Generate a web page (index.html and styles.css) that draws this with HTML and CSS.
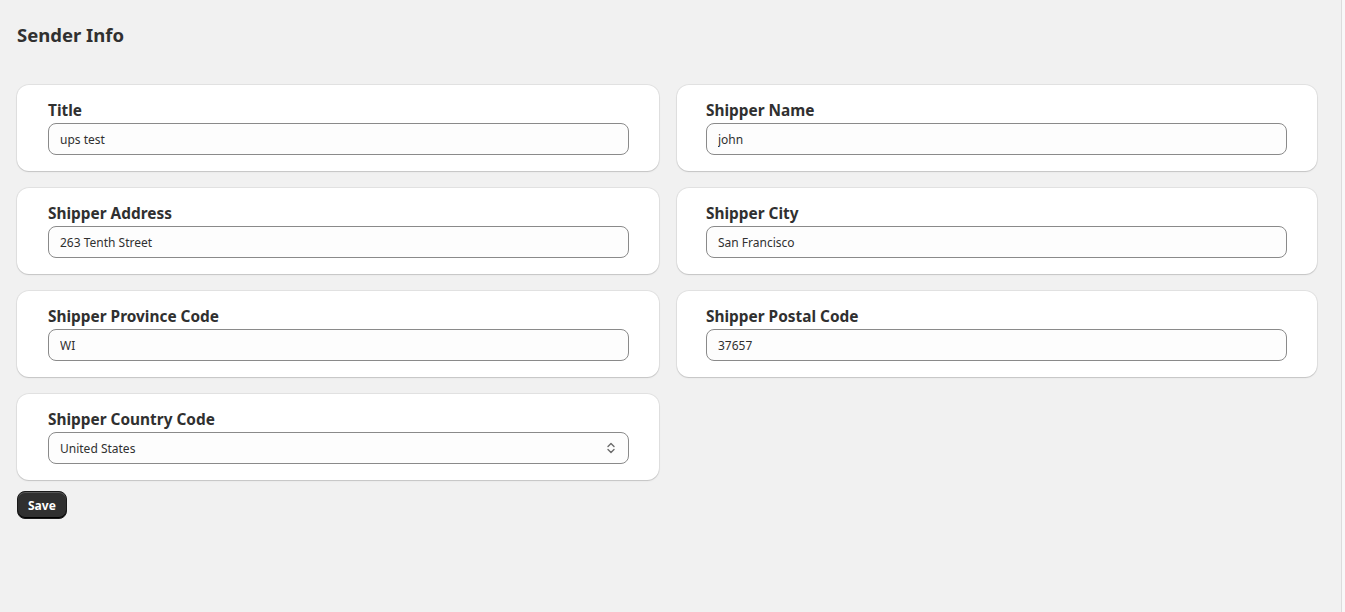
FILE: index.html
```html
<!DOCTYPE html>
<html lang="en">
<head>
<meta charset="utf-8">
<title>Sender Info</title>
<link rel="stylesheet" href="styles.css">
</head>
<body>
<div class="page">
  <h1 class="heading">Sender Info</h1>
  <form class="form">
    <div class="grid">
      <div class="card">
        <label class="label">Title</label>
        <input class="field" type="text" value="ups test">
      </div>
      <div class="card card-right">
        <label class="label">Shipper Name</label>
        <input class="field" type="text" value="john">
      </div>
      <div class="card">
        <label class="label">Shipper Address</label>
        <input class="field" type="text" value="263 Tenth Street">
      </div>
      <div class="card card-right">
        <label class="label">Shipper City</label>
        <input class="field" type="text" value="San Francisco">
      </div>
      <div class="card">
        <label class="label">Shipper Province Code</label>
        <input class="field" type="text" value="WI">
      </div>
      <div class="card card-right">
        <label class="label">Shipper Postal Code</label>
        <input class="field" type="text" value="37657">
      </div>
      <div class="card">
        <label class="label">Shipper Country Code</label>
        <div class="select">
          <span class="select-value">United States</span>
          <svg class="chevron" width="10" height="14" viewBox="0 0 10 14" fill="none" stroke="#6b6b6b" stroke-width="1.4" stroke-linecap="round" stroke-linejoin="round">
            <path d="M2 5.5 L5 2.5 L8 5.5"/>
            <path d="M2 8.5 L5 11.5 L8 8.5"/>
          </svg>
        </div>
      </div>
    </div>
    <button class="save" type="button">Save</button>
  </form>
</div>
</body>
</html>
```

FILE: styles.css
```css
html, body {
  margin: 0;
  padding: 0;
  background: #f8f8f8;
}

body {
  font-family: "Noto Sans", "Open Sans", sans-serif;
  color: #303030;
}

.page {
  width: 1342px;
  height: 612px;
  box-sizing: border-box;
  background: #f1f1f1;
  border-right: 1px solid #dcdcdc;
  padding: 22px 25px 0 17px;
}

.heading {
  margin: 0;
  font-size: 18.5px;
  font-weight: 700;
  line-height: 26px;
  color: #303030;
}

.form {
  margin-top: 37px;
}

.grid {
  display: grid;
  grid-template-columns: 642px 640px;
  column-gap: 18px;
  row-gap: 17px;
  align-items: start;
}

.card {
  background: #ffffff;
  border-radius: 12px;
  box-shadow: 0 1px 0 0 rgba(26, 26, 26, 0.07), 0 0 0 1px rgba(0, 0, 0, 0.06), 0 1px 2px rgba(0, 0, 0, 0.08);
  padding: 16px 30px 15px 31px;
  display: flex;
  flex-direction: column;
  gap: 2px;
  height: 86px;
  box-sizing: border-box;
}

.card-right {
  padding-left: 29px;
}

.label {
  font-size: 15.4px;
  font-weight: 700;
  line-height: 20px;
  color: #303030;
}

.field,
.select {
  box-sizing: border-box;
  height: 32px;
  width: 100%;
  border: 1px solid #8a8a8a;
  border-radius: 8px;
  background: #fdfdfd;
  padding: 0 11px;
  font-family: "Noto Sans", "Open Sans", sans-serif;
  font-size: 12px;
  color: #303030;
  outline: none;
}

.select {
  display: flex;
  align-items: center;
  justify-content: space-between;
  padding-right: 12px;
}

.chevron {
  display: block;
}

.save {
  margin-top: 11px;
  height: 28px;
  box-sizing: border-box;
  padding: 0 10px;
  border: 1px solid #1a1a1a;
  border-radius: 8px;
  background: #303030;
  box-shadow: inset 0 -1px 0 #000, inset 0 1px 0 rgba(255,255,255,0.2);
  color: #ffffff;
  font-family: "Noto Sans", "Open Sans", sans-serif;
  font-size: 12px;
  font-weight: 700;
  cursor: pointer;
}
```
